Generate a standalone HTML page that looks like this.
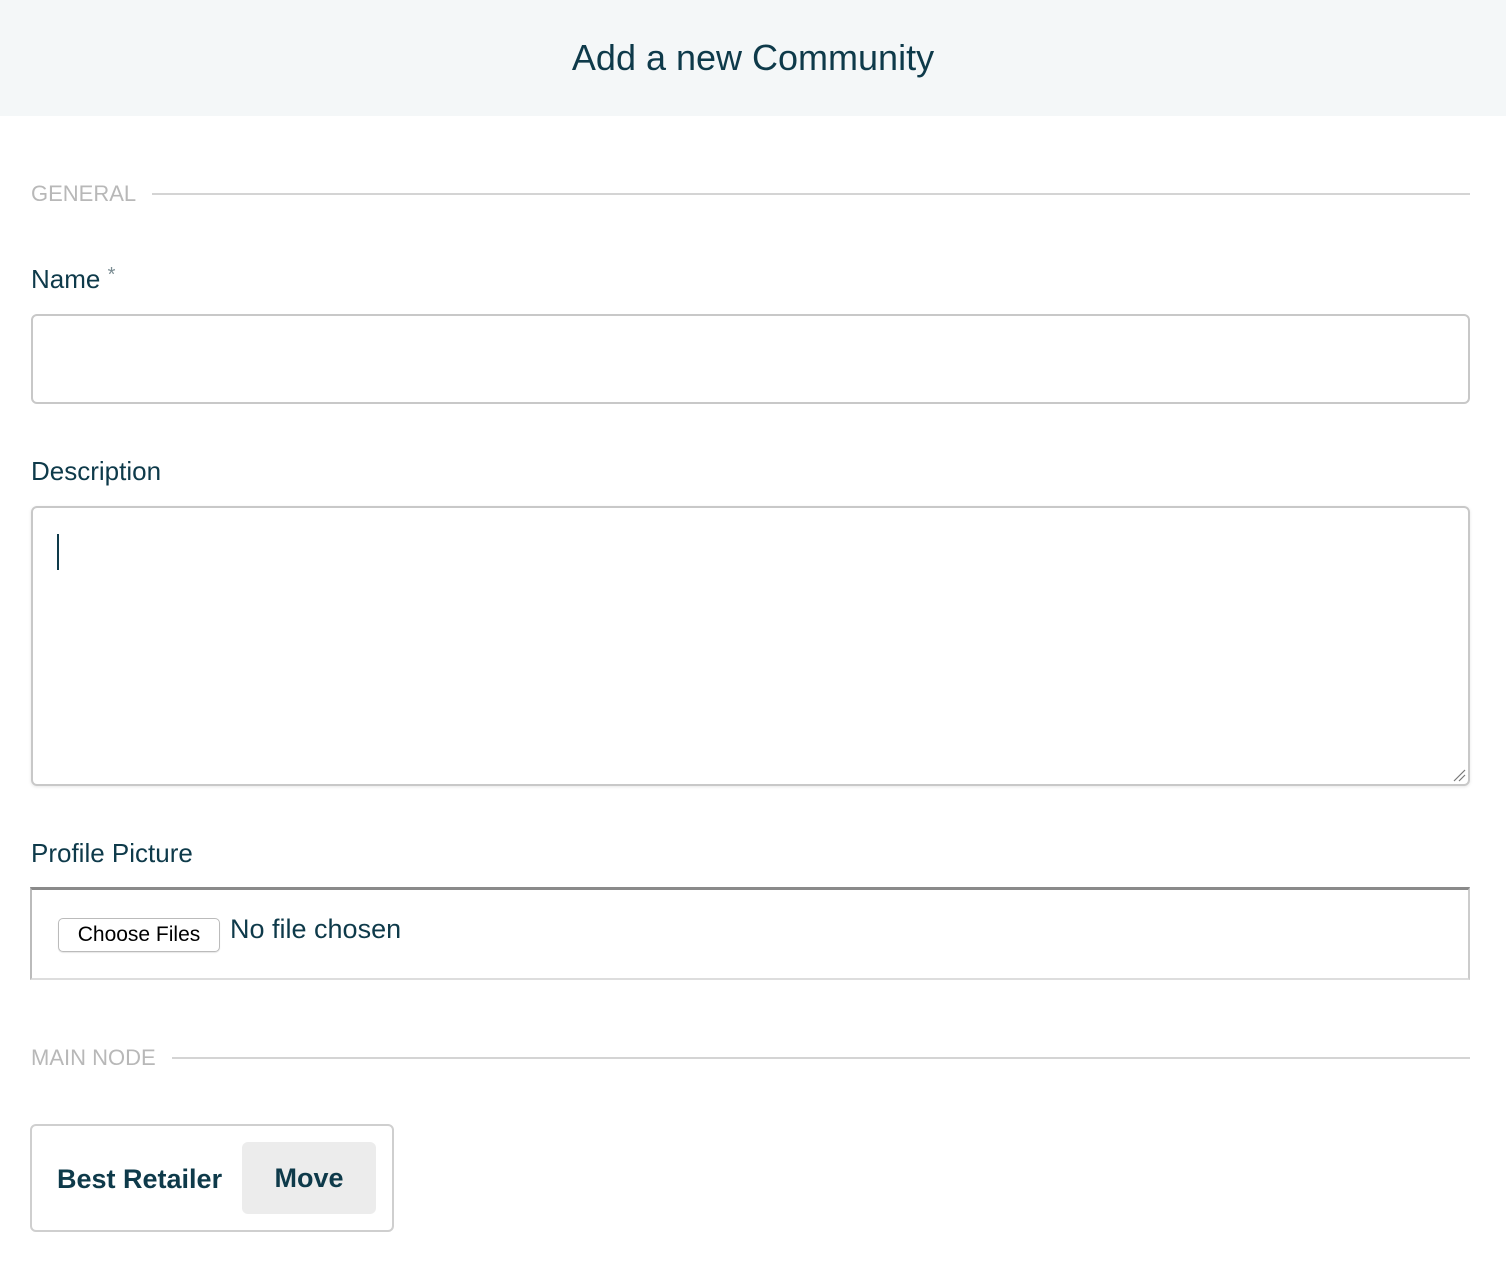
<!DOCTYPE html>
<html><head><meta charset="utf-8"><style>
*{box-sizing:border-box;margin:0;padding:0}
body{width:1506px;height:1270px;background:#fff;font-family:"Liberation Sans",sans-serif;color:#0e3a4a;position:relative;overflow:hidden}
.hdr{position:absolute;left:0;top:0;width:1506px;height:116px;background:#f4f7f8;text-align:center;font-size:36px;line-height:116px;color:#0e3a4a}
.sec{position:absolute;left:31px;font-size:22px;color:#b8b8b8;display:flex;align-items:center;width:1439px}
.sec .ln{flex:1;height:2px;background:#d4d4d4;margin-left:16px}
.lbl{position:absolute;left:31px;font-size:26px;color:#0e3a4a}
.box{position:absolute;left:31px;width:1439px;border:2px solid #c8c8c8;border-radius:6px}
</style></head><body>
<div class="hdr">Add a new Community</div>
<div class="sec" style="top:181px">GENERAL<div class="ln"></div></div>
<div class="lbl" style="top:264px">Name <span style="color:#7a8c92;font-size:20px;vertical-align:top">*</span></div>
<div class="box" style="top:314px;height:90px"></div>
<div class="lbl" style="top:456px">Description</div>
<div class="box" style="top:506px;height:280px;box-shadow:0 1px 3px rgba(0,0,0,.1)">
<div style="position:absolute;left:24px;top:26px;width:2px;height:36px;background:#0e3a4a"></div>
<svg style="position:absolute;right:2px;bottom:2px" width="14" height="14"><path d="M2 13L13 2M7 13L13 7" stroke="#777" stroke-width="1.2"/></svg>
</div>
<div class="lbl" style="top:838px">Profile Picture</div>
<div style="position:absolute;left:30px;top:887px;width:1440px;height:93px;border-top:3px solid #8a8a8a;border-left:2px solid #bbb;border-right:2px solid #ccc;border-bottom:2px solid #ddd">
<div style="position:absolute;left:26px;top:28px;width:162px;height:34px;border:1px solid #bbb;border-radius:5px;font-size:21px;line-height:32px;text-align:center;color:#000;box-shadow:0 1px 1px rgba(0,0,0,.1)">Choose Files</div>
<div style="position:absolute;left:198px;top:24px;font-size:27px;color:#0e3a4a">No file chosen</div>
</div>
<div class="sec" style="top:1045px">MAIN NODE<div class="ln"></div></div>
<div style="position:absolute;left:30px;top:1124px;width:364px;height:108px;border:2px solid #cfcfcf;border-radius:6px">
<div style="position:absolute;left:25px;top:38px;font-size:27px;font-weight:bold;color:#0e3a4a">Best Retailer</div>
<div style="position:absolute;left:210px;top:16px;width:134px;height:72px;background:#ececec;border-radius:6px;font-size:27px;font-weight:bold;line-height:72px;text-align:center;color:#0e3a4a">Move</div>
</div>
</body></html>
